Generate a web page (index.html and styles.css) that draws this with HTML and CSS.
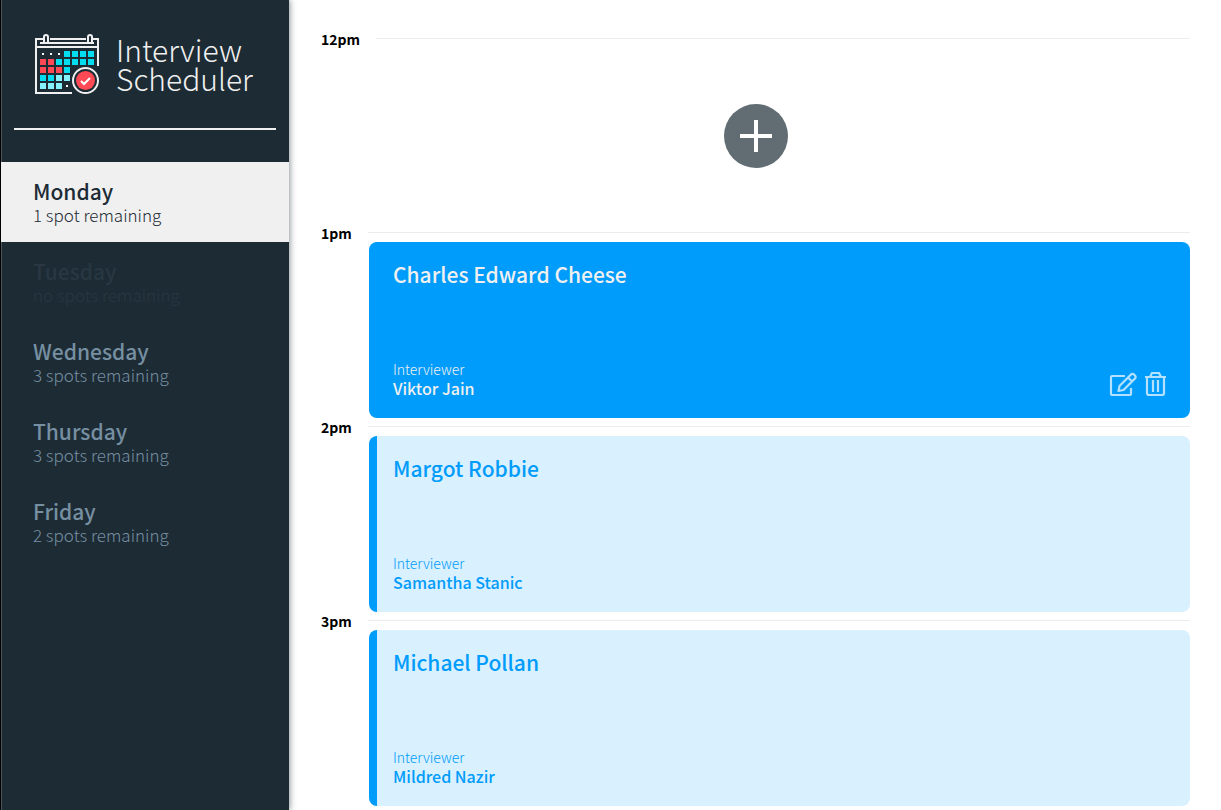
FILE: index.html
```html
<!DOCTYPE html>
<html lang="en">
<head>
<meta charset="utf-8">
<title>Interview Scheduler</title>
<link rel="stylesheet" href="styles.css">
</head>
<body>
<div class="layout">
  <aside class="sidebar">
    <div class="brand">
      <svg class="brand-icon" viewBox="0 -1 66 62" width="66" height="62" fill="none" aria-hidden="true">
        <path d="M8 5H1V59H37M15 5H51M58 5H63V32M1 13H63M5 9H59" stroke="#f0f0f0" stroke-width="2"/>
        <path d="M9 9V3a2 2 0 0 1 4 0v6M53 9V3a2 2 0 0 1 4 0v6" stroke="#f0f0f0" stroke-width="2"/>
        <path d="M7 19h2v2H7zM15 19h2v2h-2zM23 19h2v2h-2zM31 51h2v2h-2z" fill="#fff"/>
        <path d="M29 17h6v6h-6zM37 17h6v6h-6zM45 17h6v6h-6zM53 17h6v6h-6zM21 25h6v6h-6zM29 25h6v6h-6zM37 25h6v6h-6zM45 25h6v6h-6zM53 25h6v6h-6zM29 33h6v6h-6zM5 41h6v6H5zM13 41h6v6h-6z" fill="#00dcf0"/>
        <path d="M5 25h6v6H5zM13 25h6v6h-6zM5 33h6v6H5zM13 33h6v6h-6zM21 33h6v6h-6z" fill="#ff4a55"/>
        <path d="M21 41h6v6h-6zM29 41h6v6h-6zM5 49h6v6H5zM13 49h6v6h-6zM21 49h6v6h-6z" fill="#86f2fb"/>
        <circle cx="50.500" cy="46.500" r="14" fill="#1d2b35"/>
        <circle cx="50.500" cy="46.500" r="12.500" stroke="#f0f0f0" stroke-width="2"/>
        <circle cx="50.500" cy="46.500" r="9.500" fill="#ff4a55"/>
        <path d="M46 47l3 3 6-6" stroke="#fff" stroke-width="2"/>
      </svg>
      <h1 class="brand-name">Interview<br>Scheduler</h1>
    </div>
    <hr class="divider">
    <nav class="days">
      <button class="day day-selected" type="button"><span class="day-name">Monday</span><span class="day-spots">1 spot remaining</span></button>
      <button class="day day-full" type="button" disabled><span class="day-name">Tuesday</span><span class="day-spots">no spots remaining</span></button>
      <button class="day" type="button"><span class="day-name">Wednesday</span><span class="day-spots">3 spots remaining</span></button>
      <button class="day" type="button"><span class="day-name">Thursday</span><span class="day-spots">3 spots remaining</span></button>
      <button class="day" type="button"><span class="day-name">Friday</span><span class="day-spots">2 spots remaining</span></button>
    </nav>
  </aside>
  <main class="schedule">
    <article class="slot">
      <header class="slot-header"><h2 class="time">12pm</h2></header>
      <div class="slot-empty">
        <button class="add" type="button" aria-label="Add appointment">
          <svg viewBox="0 0 64 64" width="64" height="64" aria-hidden="true"><path d="M32 16v32M16 32h32" stroke="#fff" stroke-width="4"/></svg>
        </button>
      </div>
    </article>
    <article class="slot">
      <header class="slot-header"><h2 class="time">1pm</h2></header>
      <section class="card card-active">
        <div class="card-body">
          <h3 class="student">Charles Edward Cheese</h3>
          <div><h4 class="label">Interviewer</h4><p class="interviewer">Viktor Jain</p></div>
        </div>
        <div class="actions">
          <button class="action" type="button" aria-label="Edit">
            <svg viewBox="0 0 28 26" width="28" height="26" fill="none" stroke="#b3e1ff" stroke-width="2.200" stroke-linejoin="round" aria-hidden="true"><path d="M16 4H3a1 1 0 0 0-1 1V22a1 1 0 0 0 1 1H21a1 1 0 0 0 1-1V16"/><path d="M10.500 14L22 2.500a2 2 0 0 1 3 0l1 1a2 2 0 0 1 0 3L14.500 18l-5 1zM19 5.500l4 4"/></svg>
          </button>
          <button class="action" type="button" aria-label="Delete">
            <svg viewBox="0 0 22 26" width="22" height="26" fill="none" stroke="#b3e1ff" stroke-width="2.200" aria-hidden="true"><path d="M0 5H21M5 5L7 1h7l2 4M2 5V21a2 2 0 0 0 2 2H17a2 2 0 0 0 2-2V5M8 8V20M13 8V20"/></svg>
          </button>
        </div>
      </section>
    </article>
    <article class="slot">
      <header class="slot-header"><h2 class="time">2pm</h2></header>
      <section class="card">
        <div class="card-body">
          <h3 class="student">Margot Robbie</h3>
          <div><h4 class="label">Interviewer</h4><p class="interviewer">Samantha Stanic</p></div>
        </div>
      </section>
    </article>
    <article class="slot">
      <header class="slot-header"><h2 class="time">3pm</h2></header>
      <section class="card">
        <div class="card-body">
          <h3 class="student">Michael Pollan</h3>
          <div><h4 class="label">Interviewer</h4><p class="interviewer">Mildred Nazir</p></div>
        </div>
      </section>
    </article>
  </main>
</div>
</body>
</html>
```
FILE: styles.css
```css
* { box-sizing: border-box; }
body, h1, h2, h3, h4, p { margin: 0; }
body {
  font-family: "Source Sans Pro", "Noto Sans CJK SC", "Noto Sans", sans-serif;
  background: #fff;
}
button { font: inherit; border: 0; padding: 0; background: none; cursor: pointer; }
svg { display: block; }
.layout { display: flex; min-height: 100vh; }
.sidebar {
  flex: 0 0 289px;
  border-left: 1px solid #000;
  background: #1d2b35;
  box-shadow: 1px 0 6px rgba(29, 43, 53, 0.5), inset 1px 0 0 #4a545d;
}
.brand { display: flex; align-items: center; gap: 15px; padding: 32px 32px 0 34px; height: 96px; }
.brand-icon { flex: none; }
.brand-name { font-size: 30px; font-weight: 300; line-height: 29px; color: #f0f0f0; }
.divider { margin: 32px 13px; border: 0; height: 2px; background: #f0f0f0; }
.days { display: flex; flex-direction: column; }
.day { display: flex; flex-direction: column; padding: 16px 32px; text-align: left; color: #768fa1; }
.day-name { font-size: 21px; font-weight: 500; line-height: 26px; }
.day-spots { font-size: 17px; font-weight: 300; line-height: 22px; }
.day-selected { background: #f0f0f0; color: #1d2b35; }
.day-full { color: #283742; cursor: default; }
.schedule { flex: 1; min-width: 0; padding: 30px 31px 0 32px; }
.slot-header { display: flex; align-items: center; gap: 16px; height: 18px; }
.slot-header::after { content: ""; flex: 1; height: 2px; border-top: 1px solid #ededed; }
.time { font-size: 14px; font-weight: 700; line-height: 18px; color: #000; }
.slot-empty { display: flex; align-items: center; justify-content: center; height: 176px; }
.add { border-radius: 50%; background: #626c73; }
.card {
  display: flex;
  justify-content: space-between;
  min-height: 176px;
  margin-left: 48px;
  padding: 16px 23px 20px 16px;
  border-left: 8px solid #009cfb;
  border-radius: 8px;
  background: #d9f0ff;
  color: #009cfb;
}
.card-active { background: #009cfb; color: #f0f0f0; }
.card-body { display: flex; flex-direction: column; justify-content: space-between; }
.student { font-size: 21px; font-weight: 500; line-height: 32px; }
.label { font-size: 14px; font-weight: 300; line-height: 18px; }
.interviewer { font-size: 16px; font-weight: 500; line-height: 20px; }
.actions { display: flex; align-items: flex-end; gap: 8px; }
```
